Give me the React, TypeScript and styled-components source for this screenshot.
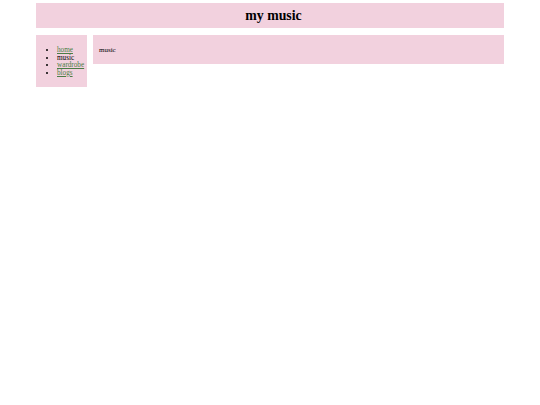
import styled, {createGlobalStyle} from "styled-components";

const GlobalStyle = createGlobalStyle`
    body {
        margin: 0;
        background: #ffffff;
        font-family: 'Liberation Serif', 'Times New Roman', serif;
        color: #000;
    }
`

const links = [
    {label: 'home', href: '#home', current: false},
    {label: 'music', href: '#music', current: true},
    {label: 'wardrobe', href: '#wardrobe', current: false},
    {label: 'blogs', href: '#blogs', current: false},
];

export default function App() {
    return (
        <>
            <GlobalStyle/>
            <Page>
                <Header>
                    <Title>my music</Title>
                </Header>
                <Row>
                    <Sidebar>
                        <NavList>
                            {links.map(link => (
                                <NavItem key={link.label}>
                                    {link.current
                                        ? <span>{link.label}</span>
                                        : <NavLink href={link.href}>{link.label}</NavLink>}
                                </NavItem>
                            ))}
                        </NavList>
                    </Sidebar>
                    <Content>
                        <ContentText>music</ContentText>
                    </Content>
                </Row>
            </Page>
        </>
    );
}

const Page = styled.div`
    width: 468px;
    margin: 3px auto 0;
    display: flex;
    flex-direction: column;
    gap: 7px;
`

const Header = styled.header`
    height: 25px;
    background-color: #f2d1de;
    display: flex;
    align-items: center;
    justify-content: center;
    padding-left: 7px;
`

const Title = styled.h1`
    margin: 0;
    font-size: 13.8px;
    font-weight: 700;
    line-height: 1;
`

const Row = styled.div`
    display: flex;
    align-items: flex-start;
    gap: 6px;
`

const Sidebar = styled.nav`
    width: 51px;
    flex-shrink: 0;
    background-color: #f2d1de;
    padding: 12px 0 10px;
    box-sizing: border-box;
`

const NavList = styled.ul`
    margin: 0;
    padding-left: 21px;
    font-size: 7.2px;
    line-height: 7.6px;
`

const NavItem = styled.li`
    padding-left: 0;
`

const NavLink = styled.a`
    color: #4a7d45;
    text-decoration: underline;
`

const Content = styled.main`
    flex: 1;
    height: 29px;
    background-color: #f2d1de;
    padding: 0 6px;
    box-sizing: border-box;
    display: flex;
    align-items: center;
`

const ContentText = styled.p`
    margin: 0;
    font-size: 7px;
    line-height: 8px;
`
